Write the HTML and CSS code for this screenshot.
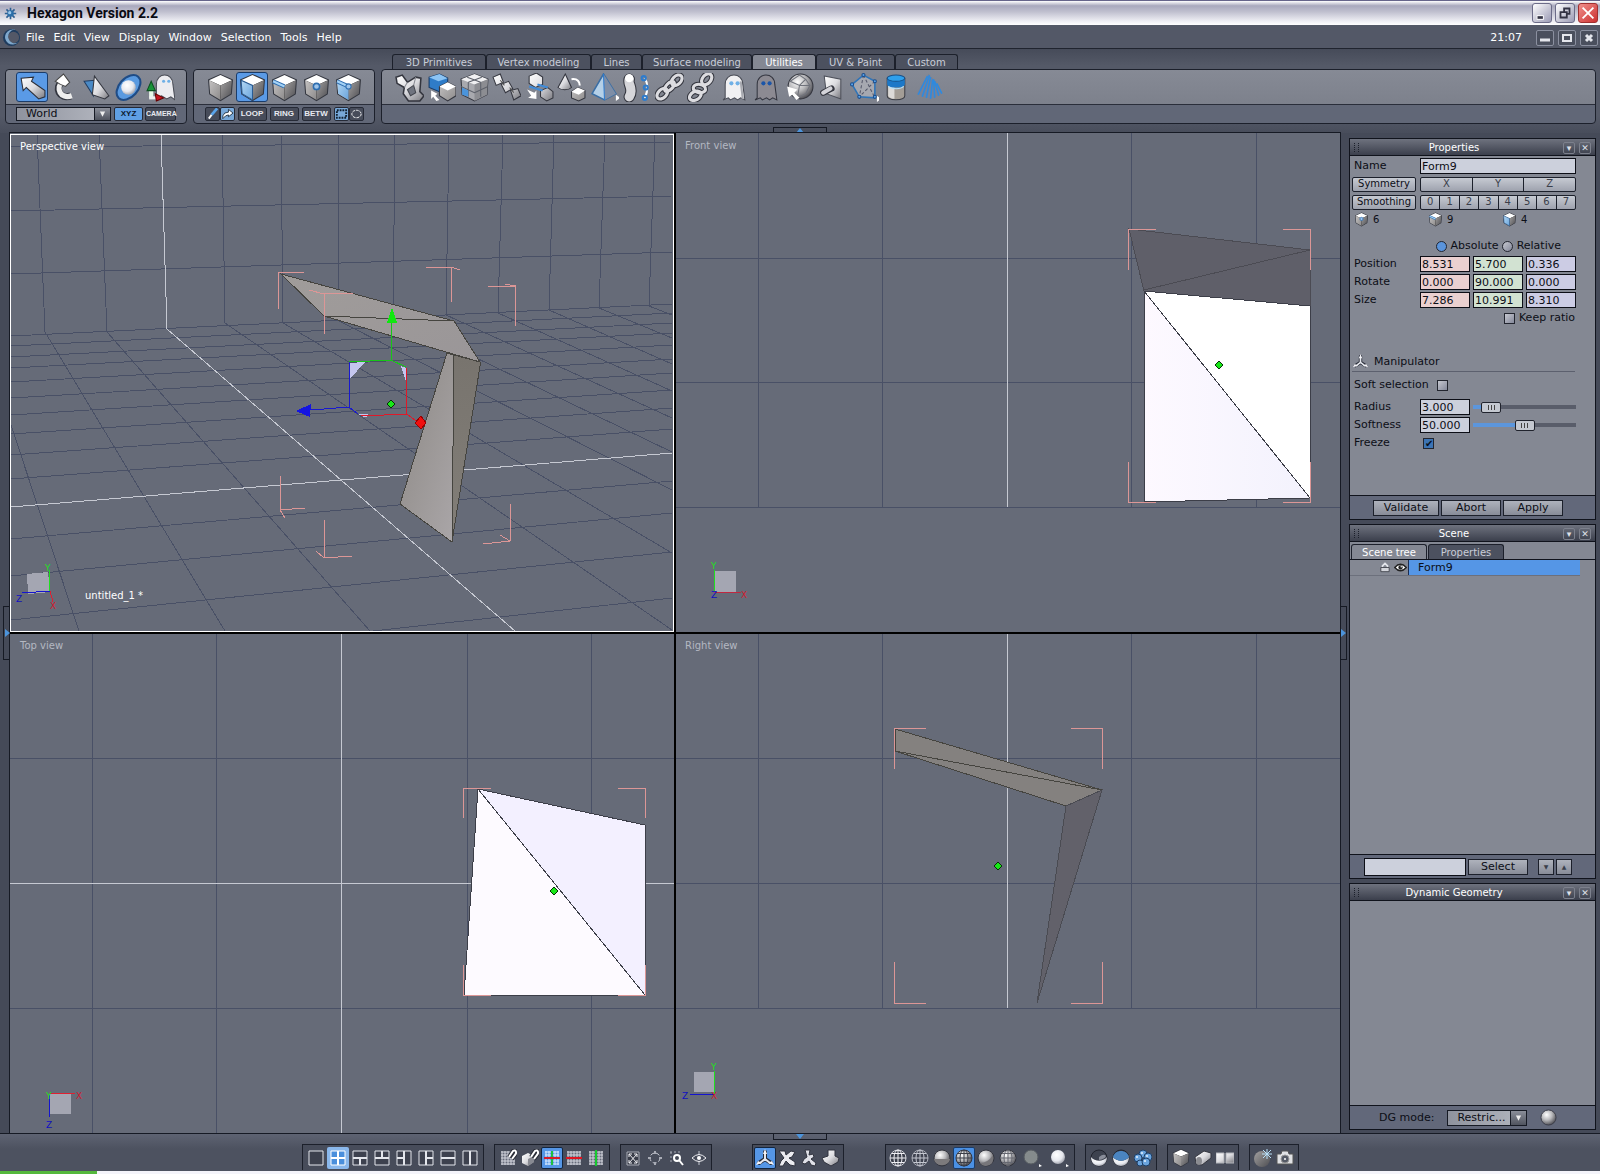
FILE: index.html
```html
<!DOCTYPE html>
<html lang="en">
<head>
<meta charset="utf-8">
<title>Hexagon Version 2.2</title>
<link rel="stylesheet" href="styles.css">
</head>
<body>

<svg class="defs" aria-hidden="true">
  <defs>
    <linearGradient id="gm" x1="0" y1="0" x2="1" y2="1"><stop offset="0" stop-color="#fff"/><stop offset=".5" stop-color="#dcdce0"/><stop offset="1" stop-color="#77777d"/></linearGradient>
    <linearGradient id="gl" x1="0" y1="0" x2="1" y2="1"><stop offset="0" stop-color="#c4c2c2"/><stop offset="1" stop-color="#8d8b8b"/></linearGradient>
    <linearGradient id="gd" x1="0" y1="0" x2="1" y2="1"><stop offset="0" stop-color="#a3a1a1"/><stop offset="1" stop-color="#4e4e52"/></linearGradient>
    <linearGradient id="gb" x1="0" y1="0" x2="1" y2="1"><stop offset="0" stop-color="#b4d8f4"/><stop offset="1" stop-color="#6aa4dc"/></linearGradient>
    <radialGradient id="rs" cx=".38" cy=".32" r=".7"><stop offset="0" stop-color="#fff"/><stop offset=".5" stop-color="#b9b9bc"/><stop offset="1" stop-color="#4f4f55"/></radialGradient>
    <radialGradient id="rw" cx=".4" cy=".35" r=".7"><stop offset="0" stop-color="#fff"/><stop offset=".6" stop-color="#e6e8ee"/><stop offset="1" stop-color="#9a9ca6"/></radialGradient>
    <linearGradient id="beam" x1="0" y1="0" x2="1" y2="1"><stop offset="0" stop-color="#a09c9a"/><stop offset="1" stop-color="#9a9698"/></linearGradient>
    <linearGradient id="legl" x1="0" y1="0" x2="1" y2="1"><stop offset="0" stop-color="#8c8884"/><stop offset="1" stop-color="#aaa6a8"/></linearGradient>
    <linearGradient id="legr" x1="0" y1="0" x2="0" y2="1"><stop offset="0" stop-color="#78746e"/><stop offset="1" stop-color="#827e78"/></linearGradient>
    <linearGradient id="lilac" x1="0" y1="0" x2="1" y2="0"><stop offset="0" stop-color="#fdf9ff"/><stop offset="1" stop-color="#f3f2fd"/></linearGradient>

    <symbol id="cube" viewBox="0 0 28 28"><path d="M14 2 25 7 24 20 14 26 4 20 3 7Z" stroke="#33363f" stroke-width="2"/><path d="M14 2 25 7 14 12 3 7Z" fill="#fff"/><path d="M3 7 14 12V26L4 20Z" fill="url(#gl)"/><path d="M25 7 14 12V26L24 20Z" fill="url(#gd)"/></symbol>
    <symbol id="cube-face" viewBox="0 0 28 28"><use href="#cube"/><path d="M3 7 14 12V26L4 20Z" fill="url(#gb)" stroke="#2a5c94"/></symbol>
    <symbol id="cube-edge" viewBox="0 0 28 28"><use href="#cube"/><path d="M3 8 14 13" stroke="#2f6eb0" stroke-width="4"/><path d="M3 8 14 13" stroke="#a4d2f6" stroke-width="2"/></symbol>
    <symbol id="cube-point" viewBox="0 0 28 28"><use href="#cube"/><circle cx="14" cy="13" r="3" fill="#9ec4ea" stroke="#2f6eb0" stroke-width="1.5"/></symbol>
    <symbol id="cube-auto" viewBox="0 0 28 28"><use href="#cube"/><path d="M3 7 14 12V26L4 20Z" fill="url(#gb)"/><path d="M3 8 14 13" stroke="#2f6eb0" stroke-width="4"/><path d="M3 8 14 13" stroke="#a4d2f6" stroke-width="2"/><circle cx="14" cy="13" r="2.500" fill="#9ec4ea" stroke="#2f6eb0"/></symbol>
    <symbol id="arrow" viewBox="0 0 28 28"><path d="M3 5 15 4 13 8 26 17V23L20 25 8 14 5 17Z" fill="url(#gm)" stroke="#2b2e38"/></symbol>
    <symbol id="rotate" viewBox="0 0 28 28"><path d="M20 22C9 26 4 14 12 8" fill="none" stroke="#32353f" stroke-width="7"/><path d="M21 22C10 26 5 14 12 8" fill="none" stroke="#eee" stroke-width="5"/><path d="M5 8 13 1 19 9 15 13 10 11Z" fill="#fff" stroke="#444"/></symbol>
    <symbol id="scale" viewBox="0 0 28 28"><path d="M2 8 12 7 11 22Z" fill="#4a8ac6" stroke="#223c60"/><path d="M12 3 26 22 22 25 10 21Z" fill="url(#gm)" stroke="#33363f"/></symbol>
    <symbol id="orbit" viewBox="0 0 28 28"><ellipse cx="14" cy="14" rx="14" ry="9" transform="rotate(-48 14 14)" fill="#5a9ae0" stroke="#1f4c86" stroke-width="2"/><circle cx="14" cy="14" r="7" fill="url(#rw)"/></symbol>
    <symbol id="ghost" viewBox="0 0 28 28"><path d="M5 24V11C5 -1 22 -1 22 11L24 26 20 24 17 26 14 24 10 26 8 24 3 26Z" fill="#f0f0f2" stroke="#494c56"/><path d="M20 8 22 25" stroke="#a7a9b0" stroke-width="2"/><circle cx="11" cy="10" r="2" fill="#6fb0e6"/><circle cx="17" cy="10" r="2" fill="#6fb0e6"/></symbol>
    <symbol id="ghost-dark" viewBox="0 0 28 28"><path d="M5 24V11C5 -1 22 -1 22 11L24 26 20 24 17 26 14 24 10 26 8 24 3 26Z" fill="#8c8a92" stroke="#33353f"/><circle cx="11" cy="10" r="2" fill="#1c56a8"/><circle cx="17" cy="10" r="2" fill="#1c56a8"/></symbol>
    <symbol id="ghost-axis" viewBox="0 0 28 28"><path d="M10 24V11C10 -1 26 -1 26 11L28 26 24 23 20 25 15 22Z" fill="#ececf0" stroke="#494c56"/><circle cx="17" cy="8" r="1.500" fill="#6fb0e6"/><circle cx="22" cy="8" r="1.500" fill="#6fb0e6"/><path d="M5 24V16" stroke="#e8f8e8" stroke-width="4"/><path d="M5 8 9 17H1Z" fill="#189438" stroke="#0c5020"/><path d="M3 24H10" stroke="#eee" stroke-width="3"/><path d="M9 20 17 24 10 27Z" fill="#c81420" stroke="#600"/></symbol>
    <symbol id="knot" viewBox="0 0 28 28"><path d="M1 4 7 2 12 9 20 4 25 5 24 18 28 22 24 27 13 27 8 20 9 14 2 10Z" fill="url(#gm)" stroke="#33353e" stroke-width="1.500"/><path d="M12 16 18 12 20 19 15 22Z" fill="#70747f" stroke="#44474f"/><path d="M12 9 9 14M20 4 18 12" stroke="#8a8c94"/></symbol>
    <symbol id="two-cubes" viewBox="0 0 28 28"><path d="M2 4 12 1 20 5V15L12 18 2 14Z" fill="#2f7cc8" stroke="#173a66"/><path d="M2 4 12 1 20 5 11 8Z" fill="#8cc4f4"/><path d="M12 13 20 9 28 13V22L20 27 12 22Z" fill="url(#gl)" stroke="#33353e"/><path d="M12 13 20 9 28 13 20 17Z" fill="#fff"/><path d="M4 17 10 20 8 22 12 26 9 27 6 23 4 25Z" fill="#fff"/></symbol>
    <symbol id="lattice" viewBox="0 0 28 28"><path d="M14 1 27 6 26 21 14 27 2 21 1 6Z" stroke="#33363f" fill="#a8a9ae"/><path d="M14 1 27 6 14 11 1 6Z" fill="#f0f0f2"/><path d="M27 6 14 11V27L26 21Z" fill="#8c8d92"/><path d="M1 13 14 19 27 13M8 9V23M20 9V23M7 4 20 9M21 4 8 9" fill="none" stroke="#5c606a"/><path d="M2 14 8 17V23L2 21Z" fill="#4a94dc"/></symbol>
    <symbol id="chain-cubes" viewBox="0 0 28 28"><path d="M1 4 8 1 11 9 4 12ZM9 11 16 8 20 15 13 19ZM18 17 25 15 28 22 21 26Z" fill="url(#gm)" stroke="#33353e"/><path d="M8 7 12 12M17 14 21 19" stroke="#555"/></symbol>
    <symbol id="stack" viewBox="0 0 28 28"><path d="M4 3 11 0 17 4V11L10 14 4 10ZM15 17 22 14 27 18V24L21 27 15 23Z" fill="url(#gm)" stroke="#33353e"/><path d="M4 13 17 17M12 11 22 14" stroke="#3f8ad8" stroke-width="2"/><path d="M2 16 9 19 11 17V25L3 24 6 22Z" fill="#fff"/></symbol>
    <symbol id="cone-cube" viewBox="0 0 28 28"><path d="M8 1 14 14C11 17 4 17 1 14Z" fill="url(#gm)" stroke="#33353e"/><path d="M14 18 20 14 27 17V24L21 27 14 24Z" fill="url(#gl)" stroke="#33353e"/><path d="M14 18 20 14 27 17 21 21Z" fill="#fff"/><path d="M14 6C20 5 22 9 22 12" fill="none" stroke="#fff" stroke-width="2"/></symbol>
    <symbol id="pyramid" viewBox="0 0 28 28"><path d="M13 1 25 20 14 26 2 20Z" fill="#b4d0e8" stroke="#3a6ea4" stroke-width="1.500"/><path d="M13 1 25 20 14 26Z" fill="#7f8ea6"/><path d="M13 1 14 26" stroke="#2f7cd0"/><path d="M25 21 29 24 25 27Z" fill="#fff"/></symbol>
    <symbol id="bend" viewBox="0 0 28 28"><path d="M7 6C5 11 12 15 7 23" fill="none" stroke="#33353e" stroke-width="11" stroke-linecap="round"/><path d="M7 6C5 11 12 15 7 23" fill="none" stroke="#d6d6da" stroke-width="9" stroke-linecap="round"/><circle cx="7" cy="5" r="4" fill="#fff"/><path d="M22 5Q27 13 22 24" fill="none" stroke="#fff" stroke-width="2"/><g fill="none" stroke="#2f7ccc" stroke-width="2"><circle cx="21" cy="5" r="2"/><circle cx="23" cy="14" r="2"/><circle cx="22" cy="24" r="2"/></g></symbol>
    <symbol id="link" viewBox="0 0 28 28"><g fill="none" stroke="#33353e" stroke-width="5"><ellipse cx="7" cy="20" rx="6" ry="4" transform="rotate(-45 7 20)"/><ellipse cx="14" cy="13" rx="6" ry="3" transform="rotate(-45 14 13)"/><ellipse cx="21" cy="7" rx="6" ry="4" transform="rotate(-45 21 7)"/></g><g fill="none" stroke="#dcdce0" stroke-width="3"><ellipse cx="7" cy="20" rx="6" ry="4" transform="rotate(-45 7 20)"/><ellipse cx="14" cy="13" rx="6" ry="3" transform="rotate(-45 14 13)"/><ellipse cx="21" cy="7" rx="6" ry="4" transform="rotate(-45 21 7)"/></g></symbol>
    <symbol id="unlink" viewBox="0 0 28 28"><g fill="none" stroke="#33353e" stroke-width="5"><ellipse cx="8" cy="22" rx="6" ry="4" transform="rotate(-30 8 22)"/><ellipse cx="12" cy="15" rx="6" ry="4" transform="rotate(10 12 15)"/><ellipse cx="19" cy="6" rx="6" ry="4" transform="rotate(-50 19 6)"/></g><g fill="none" stroke="#dcdce0" stroke-width="3"><ellipse cx="8" cy="22" rx="6" ry="4" transform="rotate(-30 8 22)"/><ellipse cx="12" cy="15" rx="6" ry="4" transform="rotate(10 12 15)"/><ellipse cx="19" cy="6" rx="6" ry="4" transform="rotate(-50 19 6)"/></g></symbol>
    <symbol id="mesh-ball" viewBox="0 0 28 28"><circle cx="15" cy="13" r="12" fill="url(#rs)" stroke="#33353e"/><path d="M5 8 14 2 20 6 14 12ZM14 12 24 12 20 6M14 12 12 24M24 12 20 20 12 24" fill="none" stroke="#70737c"/><path d="M2 13 12 16 9 19 14 24 11 26 7 21 4 23Z" fill="#fff"/></symbol>
    <symbol id="plane" viewBox="0 0 28 28"><path d="M7 3 23 6V25L9 20Z" fill="url(#gm)" stroke="#4d505a"/><path d="M6 19 14 15" stroke="#33353e" stroke-width="6" stroke-linecap="round"/><path d="M6 19 13 15" stroke="#d4d4da" stroke-width="4" stroke-linecap="round"/></symbol>
    <symbol id="poly" viewBox="0 0 28 28"><path d="M2 11 13 2 24 8V24L9 23Z" fill="#a6a8b0" stroke="#2f74b8" stroke-width="1.500"/><path d="M13 2 9 23M24 8 9 23M13 2 24 24" stroke="#55586a" stroke-dasharray="3 2"/><g fill="#5aa4ea" stroke="#1d4d8a"><circle cx="2" cy="11" r="1.500"/><circle cx="13" cy="2" r="1.500"/><circle cx="24" cy="8" r="1.500"/><circle cx="9" cy="23" r="1.500"/><circle cx="24" cy="23" r="1.500"/></g><path d="M26 22 30 25 26 28Z" fill="#fff"/></symbol>
    <symbol id="can" viewBox="0 0 28 28"><path d="M5 5V22C5 27 22 27 22 22V5Z" fill="#a39d96" stroke="#3c3e46"/><path d="M6 12V22C7 25 12 25 12 25V13Z" fill="#dcdad8"/><path d="M5 5V11C5 15 22 15 22 11V5Z" fill="#1c78c8"/><ellipse cx="13.500" cy="5" rx="8.500" ry="3" fill="#2fa0ec" stroke="#174f86"/><path d="M6 13C10 16 18 16 21 13" fill="none" stroke="#b4e0fa"/></symbol>
    <symbol id="hatch" viewBox="0 0 28 28"><path d="M13 1 20 8 26 20 14 25 2 20 6 12Z" fill="#76829a"/><path d="M3 21 12 3M7 23 14 2M11 24 15 4M15 25 17 6M19 24 18 6M23 22 19 8M26 20 21 10" stroke="#2d8ae0" stroke-width="1.500"/></symbol>

    <symbol id="frame" viewBox="0 0 18 18"><path d="M2 2H16V16H2Z" fill="#3d414e" stroke="#e4e6ec"/></symbol>
    <symbol id="grid" viewBox="0 0 18 18"><path d="M3 3H15V16H3Z" fill="#666b7a"/><path d="M3 2V16M6 2V16M9 2V16M12 2V16M15 2V16M2 3H16M2 6H16M2 9H16M2 12H16M2 15H16" stroke="#d4d6de"/></symbol>
    <symbol id="magnet" viewBox="0 0 18 18"><path d="M10 8 14 2C17 0 18 4 16 6L13 10" fill="none" stroke="#292c36" stroke-width="4"/><path d="M10 8 14 2C17 0 18 4 16 6L13 10" fill="none" stroke="#fff" stroke-width="2"/></symbol>
    <symbol id="tripod" viewBox="0 0 18 18"><path d="M9 3V10M9 10 3 14M9 10 15 14" stroke="#262a36" stroke-width="4" stroke-linecap="round"/><path d="M9 4V10M9 10 4 14M9 10 14 14" stroke="#e6e8ee" stroke-width="2" stroke-linecap="round"/><path d="M9 0 11 5H7ZM0 16 2 12 6 14ZM18 16 16 12 12 14Z" fill="#f4f4f8"/></symbol>
    <symbol id="cross" viewBox="0 0 18 18"><path d="M1 2H7L8 6 13 2 17 3 14 8 11 9 17 13V17L12 16 8 12 5 17H1L3 12 6 9Z" fill="#ececf0" stroke="#30333e"/></symbol>
    <symbol id="cross-b" viewBox="0 0 18 18"><path d="M5 1 10 1 9 6 13 5 14 8 11 10 16 14 15 17 11 16 9 12 5 15 2 14 4 10 7 8Z" fill="#e0e1e8" stroke="#30333e"/></symbol>
    <symbol id="press" viewBox="0 0 18 18"><path d="M6 1H13V7L17 9 16 13 9 17 2 13 0 9 6 7Z" fill="url(#gm)" stroke="#30333e"/></symbol>
    <symbol id="wires" viewBox="0 0 18 18"><path d="M9 1V17M1 9H17M3 4.500H15M3 13.500H15" fill="none" stroke="currentColor"/><ellipse cx="9" cy="9" rx="4" ry="8" fill="none" stroke="currentColor"/></symbol>
    <symbol id="bowl" viewBox="0 0 18 18"><circle cx="9" cy="9" r="8" fill="#3d424f" stroke="#20232d"/><path d="M1 8C1 20 17 20 17 8 13 13 5 13 1 8Z" fill="url(#rw)"/></symbol>
  </defs>
</svg>

<header>
  <div class="titlebar">
    <svg class="logo" viewBox="0 0 16 16"><path d="M8 1V15M1 8H15M3 3 13 13M13 3 3 13" stroke="#2d5f92" stroke-width="2"/><circle cx="8" cy="8" r="4" fill="#2b6ea8"/><circle cx="7" cy="7" r="2" fill="#9cc8ec"/></svg>
    <h1>Hexagon Version 2.2</h1>
    <div class="winbtns">
      <button aria-label="Minimize"><svg viewBox="0 0 20 20"><path d="M4 15H12" stroke="#fff" stroke-width="5"/><path d="M5 15H11" stroke="#334" stroke-width="3"/></svg></button>
      <button aria-label="Restore"><svg viewBox="0 0 20 20"><path d="M9 9V5H15V11H12M5 9H12V15H5Z" fill="none" stroke="#334" stroke-width="2"/></svg></button>
      <button class="close" aria-label="Close"><svg viewBox="0 0 20 20"><path d="M4 4 16 16M16 4 4 16" stroke="#fff" stroke-width="2"/></svg></button>
    </div>
  </div>
  <nav class="menubar">
    <svg class="moon" viewBox="0 0 20 20"><circle cx="10" cy="10" r="9" fill="#1f3c5e"/><circle cx="12" cy="10" r="6" fill="#535867"/><path d="M14 2A8 8 0 1 0 17 15 7 7 0 1 1 14 2Z" fill="#7fa8cc"/></svg>
    <a href="#">File</a><a href="#">Edit</a><a href="#">View</a><a href="#">Display</a><a href="#">Window</a><a href="#">Selection</a><a href="#">Tools</a><a href="#">Help</a>
    <time>21:07</time>
    <div class="docbtns">
      <button aria-label="Minimize document"><svg viewBox="0 0 16 14"><path d="M3 9H13" stroke="#e4e6ec" stroke-width="3"/></svg></button>
      <button aria-label="Maximize document"><svg viewBox="0 0 16 14"><path d="M4 4H12V10H4Z" fill="none" stroke="#e4e6ec" stroke-width="2"/></svg></button>
      <button aria-label="Close document"><svg viewBox="0 0 16 14"><path d="M5 4 11 10M11 4 5 10" stroke="#e4e6ec" stroke-width="3"/></svg></button>
    </div>
  </nav>
</header>

<section class="toolbar">
  <div class="toolbox small">
    <div class="tools">
      <button class="on" aria-label="Move"><svg><use href="#arrow"/></svg></button>
      <button aria-label="Rotate"><svg><use href="#rotate"/></svg></button>
      <button aria-label="Scale"><svg><use href="#scale"/></svg></button>
      <button aria-label="Universal"><svg><use href="#orbit"/></svg></button>
      <button aria-label="Ghost axis"><svg><use href="#ghost-axis"/></svg></button>
    </div>
    <div class="sub">
      <span class="drop world"><select aria-label="Space"><option>World</option></select><svg viewBox="0 0 8 8"><path d="M1 1H7L4 7Z" fill="#eee"/></svg></span>
      <button class="chip lit">XYZ</button><button class="chip cam">CAMERA</button>
    </div>
  </div>
  <div class="toolbox small">
    <div class="tools">
      <button aria-label="Object"><svg><use href="#cube"/></svg></button>
      <button class="on" aria-label="Faces"><svg><use href="#cube-face"/></svg></button>
      <button aria-label="Edges"><svg><use href="#cube-edge"/></svg></button>
      <button aria-label="Points"><svg><use href="#cube-point"/></svg></button>
      <button aria-label="Auto"><svg><use href="#cube-auto"/></svg></button>
    </div>
    <div class="sub chips">
      <span class="pair"><button class="chip" aria-label="Paint select"><svg viewBox="0 0 14 12"><path d="M12 0 6 7" stroke="#5aa4ea" stroke-width="3"/><path d="M6 7 3 11" stroke="#fff" stroke-width="2"/></svg></button><button class="chip lit" aria-label="Lasso"><svg viewBox="0 0 14 12"><path d="M2 11V8Q3 4 8 4V1L13 5 8 9V7Q5 7 2 11Z" fill="#fff" stroke="#234"/></svg></button></span>
      <button class="chip">LOOP</button><button class="chip">RING</button><button class="chip">BETW</button>
      <span class="pair"><button class="chip lit" aria-label="Rectangle"><svg viewBox="0 0 14 12"><path d="M2 2H12V10H2Z" fill="none" stroke="#123" stroke-width="2" stroke-dasharray="2 1"/></svg></button><button class="chip" aria-label="Ellipse"><svg viewBox="0 0 14 12"><ellipse cx="7" cy="6" rx="5" ry="4" fill="none" stroke="#fff" stroke-dasharray="3 1"/></svg></button></span>
    </div>
  </div>
  <div class="utility">
    <nav class="tabs">
      <button class="t1">3D Primitives</button><button class="t2">Vertex modeling</button><button class="t3">Lines</button><button class="t4">Surface modeling</button><button class="t5 active">Utilities</button><button class="t6">UV &amp; Paint</button><button class="t7">Custom</button>
    </nav>
    <div class="toolbox wide">
      <div class="tools many">
        <button aria-label="Knot"><svg><use href="#knot"/></svg></button>
        <button aria-label="Copy"><svg><use href="#two-cubes"/></svg></button>
        <button aria-label="Lattice"><svg><use href="#lattice"/></svg></button>
        <button aria-label="Array"><svg><use href="#chain-cubes"/></svg></button>
        <button aria-label="Align"><svg><use href="#stack"/></svg></button>
        <button aria-label="Replace"><svg><use href="#cone-cube"/></svg></button>
        <button aria-label="Symmetry"><svg><use href="#pyramid"/></svg></button>
        <button aria-label="Bend"><svg><use href="#bend"/></svg></button>
        <button aria-label="Link"><svg><use href="#link"/></svg></button>
        <button aria-label="Unlink"><svg><use href="#unlink"/></svg></button>
        <button aria-label="Ghost"><svg><use href="#ghost"/></svg></button>
        <button aria-label="Hide"><svg><use href="#ghost-dark"/></svg></button>
        <button aria-label="Smooth"><svg><use href="#mesh-ball"/></svg></button>
        <button aria-label="Plane"><svg><use href="#plane"/></svg></button>
        <button aria-label="Polygon"><svg><use href="#poly"/></svg></button>
        <button aria-label="Container"><svg><use href="#can"/></svg></button>
        <button aria-label="Hatch"><svg><use href="#hatch"/></svg></button>
      </div>
      <div class="sub"></div>
    </div>
  </div>
  <span class="grip top"><svg viewBox="0 0 8 5"><path d="M0 5 4 0 8 5Z" fill="#4c94dc"/></svg></span>
</section>

<main>
  <div class="views">
    <svg class="view" viewBox="10 133 664 499" preserveAspectRatio="xMidYMid slice">
      <g class="grid" fill="none">
        <path d="M37 134 45 332M99 134 107 332M222 134 225 323M281 134 283 323M338 134 339 321M395 134 393 318M449 134 446 315M503 134 498 313M554 134 549 310M605 134 599 308M655 134 649 306"/>
        <path d="M11 147 672 142M11 211 672 196M11 274 672 252M11 336 672 304M11 346 672 313M11 357 672 323M11 368 672 333M11 382 672 345M11 398 672 359M11 415 672 373M11 434 672 390M11 455 672 408M11 479 672 429M11 539 672 481M11 576 672 513M11 620 672 552M373 631 672 598"/>
        <path d="M11 425 79 631M45 332 225 631M107 332 370 631M225 323 672 630M283 323 672 553M339 321 672 490M393 318 672 452M446 315 672 418M498 313 672 391M549 310 672 364M599 308 672 338M649 306 672 315"/>
      </g>
      <path class="axis" d="M161 134 167 329 515 631M11 507 672 453"/>
      <g class="solid">
        <path d="M281 274 454 321 480 362 324 316Z" fill="url(#beam)"/>
        <path d="M447 353 454 355 452 542 400 504Z" fill="url(#legl)"/>
        <path d="M454 355 480 362V366L452 542Z" fill="url(#legr)"/>
        <path d="M324 316 454 321" fill="none"/>
      </g>
      <path class="bounds" d="M278 309V273L304 272M426 267H451V302M451 267 460 270M488 287 515 286V326M505 284 515 286M324 334V294L353 293M309 290 324 294M280 476V510L305 508M280 510 285 518M324 520V558L352 556M316 551 324 558M510 504V541L483 544M500 535 510 541"/>
      <path d="M349 363 365 362 349 380ZM401 366 406 368V381ZM358 414 377 415 364 417Z" fill="#c4c6ee"/>
      <g fill="none" stroke-width="1"><path d="M391 321V361M349 362 391 360 406 367" stroke="#17c617"/><path d="M349 362V407L311 410M349 407 358 414" stroke="#1818d0"/><path d="M406 367 407 414 361 416M407 414 416 421" stroke="#e01828"/></g>
      <path d="M392 307 397 323H387Z" fill="#10e810"/><path d="M296 411 311 404 310 417Z" fill="#1414e0"/><path d="M421 416 426 423 421 429 415 423Z" fill="#f01010" stroke="#900"/>
      <path class="pivot" d="M391 400 395 404 391 408 387 404Z"/>
      <path d="M27 574 48 572 50 592 28 594Z" fill="#a4a6b2"/><path d="M49 570 50 592" stroke="#1fe01f"/><path d="M22 593 50 591" stroke="#1414d0"/><path d="M50 591 53 602" stroke="#e02030"/>
      <g class="letters"><text class="y" x="45" y="571">Y</text><text class="z" x="16" y="602">Z</text><text class="x" x="50" y="609">X</text></g>
      <text class="vlabel hot" x="20" y="150">Perspective view</text>
      <text class="vlabel hot" x="85" y="599">untitled_1 *</text>
      <path d="M10.500 134.500H673.500V631.500H10.500Z" fill="none" stroke="#fff"/>
    </svg>

    <svg class="view" viewBox="676 133 664 499" preserveAspectRatio="xMidYMid slice">
      <path class="grid" d="M758.500 133V507M882.500 133V507M1131.500 133V507M1256.500 133V507M676 258.500H1340M676 382.500H1340M676 507.500H1340"/>
      <path class="axis" d="M1007.500 133V507"/>
      <g class="solid dark"><path d="M1129 229 1310 250V306L1144 291Z" fill="#5f5f69"/><path d="M1144 290 1310 250"/></g>
      <path d="M1144 291 1310 306V498Z" fill="#fff"/><path d="M1144 291 1310 498 1144 502Z" fill="url(#lilac)"/>
      <path d="M1144 291V502L1310 498M1144 291 1310 306V498M1144 291 1310 498" fill="none" stroke="#3c3e48"/>
      <path class="bounds" d="M1128.500 270V229.500H1156M1283 229.500H1310.500V270M1128.500 462V502.500H1156M1283 502.500H1310.500V462"/>
      <path class="pivot" d="M1219 361 1223 365 1219 369 1215 365Z"/>
      <path d="M715 571H736V592H715Z" fill="#a4a6b2"/><path d="M714.500 570V592" stroke="#1fe01f"/><path d="M714 592.500H741" stroke="#c02840"/>
      <g class="letters"><text class="y" x="711" y="569">Y</text><text class="z" x="711" y="598">Z</text><text class="x" x="741" y="598">X</text></g>
      <text class="vlabel" x="685" y="149">Front view</text>
    </svg>

    <svg class="view" viewBox="10 634 664 499" preserveAspectRatio="xMidYMid slice">
      <path class="grid" d="M92.500 634V1133M216.500 634V1133M467.500 634V1133M591.500 634V1133M10 758.500H674M10 1008.500H674"/>
      <path class="axis" d="M341.500 634V1133M10 883.500H674"/>
      <path d="M478 789 645 825V995Z" fill="#f3f0ff"/><path d="M478 789 645 995H464Z" fill="#fdfaff"/>
      <path d="M478 789 645 825V995H464ZL645 995" fill="none" stroke="#3c3e48"/>
      <path class="bounds" d="M463.500 818V788.500H491M618 788.500H645.500V818M463.500 965V995.500H491M618 995.500H645.500V965"/>
      <path class="pivot" d="M554 887 558 891 554 895 550 891Z"/>
      <path d="M50 1093H71V1114H50Z" fill="#a4a6b2"/><path d="M50 1093.500H75" stroke="#e02030"/><path d="M49.500 1095V1117" stroke="#1414d0"/>
      <g class="letters"><text class="y" x="46" y="1099">Y</text><text class="z" x="46" y="1128">Z</text><text class="x" x="76" y="1099">X</text></g>
      <text class="vlabel" x="20" y="649">Top view</text>
    </svg>

    <svg class="view" viewBox="676 634 664 499" preserveAspectRatio="xMidYMid slice">
      <path class="grid" d="M758.500 634V1008M882.500 634V1008M1131.500 634V1008M1256.500 634V1008M676 758.500H1340M676 883.500H1340M676 1008.500H1340"/>
      <path class="axis" d="M1007.500 634V1008"/>
      <g class="solid"><path d="M895 729 1102 790 1066 806 895 751Z" fill="#84817f"/><path d="M895 751 1102 790" fill="none"/></g>
      <path d="M1066 806 1102 790 1037 1003Z" fill="#62616a" stroke="#4a4b52"/>
      <path class="bounds" d="M894.500 769V728.500H926M1071 728.500H1102.500V769M894.500 962V1003.500H926M1071 1003.500H1102.500V962"/>
      <path class="pivot" d="M998 862 1002 866 998 870 994 866Z"/>
      <path d="M694 1072H715V1092H694Z" fill="#a4a6b2"/><path d="M714.500 1071V1094" stroke="#1fe01f"/><path d="M690 1094.500H715" stroke="#1414d0"/>
      <g class="letters"><text class="y" x="711" y="1070">Y</text><text class="z" x="682" y="1099">Z</text><text class="x" x="711" y="1099">X</text></g>
      <text class="vlabel" x="685" y="649">Right view</text>
    </svg>
    <span class="grip left"><svg viewBox="0 0 5 8"><path d="M0 0 5 4 0 8Z" fill="#4c94dc"/></svg></span>
    <span class="grip right"><svg viewBox="0 0 5 8"><path d="M0 0 5 4 0 8Z" fill="#4c94dc"/></svg></span>
  </div>

  <aside>
    <section class="panel props">
      <h2><i class="dots"></i><span>Properties</span><button aria-label="Collapse">▾</button><button aria-label="Close">✕</button></h2>
      <div class="body">
        <div class="row"><label for="nm">Name</label><input id="nm" class="name" value="Form9"></div>
        <div class="row"><button class="key">Symmetry</button><div class="seg"><button>X</button><button>Y</button><button>Z</button></div></div>
        <div class="row"><button class="key">Smoothing</button><div class="seg"><button>0</button><button>1</button><button>2</button><button>3</button><button>4</button><button>5</button><button>6</button><button>7</button></div></div>
        <div class="counts"><span><svg><use href="#cube-point"/></svg>6</span><span><svg><use href="#cube-edge"/></svg>9</span><span><svg><use href="#cube-face"/></svg>4</span></div>
        <div class="modes"><label><input type="radio" name="mode" checked>Absolute</label><label><input type="radio" name="mode">Relative</label></div>
        <div class="row"><label for="px">Position</label><div class="trio"><input id="px" class="r" value="8.531"><input class="g" value="5.700" aria-label="Position Y"><input class="b" value="0.336" aria-label="Position Z"></div></div>
        <div class="row"><label for="rx">Rotate</label><div class="trio"><input id="rx" class="r" value="0.000"><input class="g" value="90.000" aria-label="Rotate Y"><input class="b" value="0.000" aria-label="Rotate Z"></div></div>
        <div class="row"><label for="sx">Size</label><div class="trio"><input id="sx" class="r" value="7.286"><input class="g" value="10.991" aria-label="Size Y"><input class="b" value="8.310" aria-label="Size Z"></div></div>
        <div class="keep"><label><input type="checkbox">Keep ratio</label></div>
        <h3><svg viewBox="0 0 18 18"><use href="#tripod"/></svg>Manipulator</h3>
        <div class="soft"><label for="ss">Soft selection</label><input id="ss" type="checkbox"></div>
        <div class="row"><label for="ra">Radius</label><div class="slide"><input id="ra" value="3.000"><input type="range" value="10" style="--v:18%" aria-label="Radius slider"></div></div>
        <div class="row"><label for="so">Softness</label><div class="slide"><input id="so" value="50.000"><input type="range" value="50" style="--v:50%" aria-label="Softness slider"></div></div>
        <div class="row"><label for="fz">Freeze</label><input id="fz" class="fz" type="checkbox" checked></div>
      </div>
      <footer class="acts"><button class="w1">Validate</button><button>Abort</button><button>Apply</button></footer>
    </section>

    <section class="panel scene">
      <h2><i class="dots"></i><span>Scene</span><button aria-label="Collapse">▾</button><button aria-label="Close">✕</button></h2>
      <nav class="stabs"><button class="active">Scene tree</button><button>Properties</button></nav>
      <div class="body tree">
        <div class="node"><svg class="lock" viewBox="0 0 12 12"><path d="M3 6V4L6 1 9 4V6" fill="none" stroke="#e4e6ec" stroke-width="2"/><path d="M1 6H11V11H1Z" fill="#d4d6dc" stroke="#3a3c46"/></svg><svg class="eye" viewBox="0 0 18 18"><path d="M1 9Q9 0 17 9 9 18 1 9Z" fill="#fff" stroke="#222" stroke-width="2"/><circle cx="9" cy="9" r="3" fill="#222"/><circle cx="10" cy="8" r="1" fill="#fff"/></svg><span>Form9</span></div>
      </div>
      <footer class="find"><input aria-label="Search"><button>Select</button><div><button class="sq" aria-label="Next">▼</button><button class="sq" aria-label="Previous">▲</button></div></footer>
    </section>

    <section class="panel dyn">
      <h2><i class="dots"></i><span>Dynamic Geometry</span><button aria-label="Collapse">▾</button><button aria-label="Close">✕</button></h2>
      <div class="body"></div>
      <footer class="dgm"><label for="dg">DG mode:</label><span class="drop dg"><select id="dg"><option>Restric...</option></select><svg viewBox="0 0 8 8"><path d="M1 1H7L4 7Z" fill="#eee"/></svg></span><svg class="ball" viewBox="0 0 18 18"><circle cx="9" cy="9" r="8" fill="url(#rs)" stroke="#3a3d48"/></svg></footer>
    </section>
  </aside>
</main>

<footer class="dock">
  <span class="grip bottom"><svg viewBox="0 0 8 5"><path d="M0 0 4 5 8 0Z" fill="#4c94dc"/></svg></span>
  <div class="group g1">
    <button aria-label="Single view"><svg viewBox="0 0 18 18"><use href="#frame"/></svg></button>
    <button class="lit" aria-label="Four views"><svg viewBox="0 0 18 18"><path d="M2 2H16V16H2Z" fill="#4a8fdc" stroke="#fff"/><path d="M9 2V16M2 9H16" stroke="#fff" stroke-width="2"/></svg></button>
    <button aria-label="Layout 3"><svg viewBox="0 0 18 18"><use href="#frame"/><path d="M2 9H16M9 9V16" stroke="#e4e6ec" stroke-width="2"/></svg></button>
    <button aria-label="Layout 4"><svg viewBox="0 0 18 18"><use href="#frame"/><path d="M2 9H16M9 2V9" stroke="#e4e6ec" stroke-width="2"/></svg></button>
    <button aria-label="Layout 5"><svg viewBox="0 0 18 18"><use href="#frame"/><path d="M9 2V16M2 9H9" stroke="#e4e6ec" stroke-width="2"/></svg></button>
    <button aria-label="Layout 6"><svg viewBox="0 0 18 18"><use href="#frame"/><path d="M9 2V16M9 9H16" stroke="#e4e6ec" stroke-width="2"/></svg></button>
    <button aria-label="Layout 7"><svg viewBox="0 0 18 18"><use href="#frame"/><path d="M2 9H16" stroke="#e4e6ec" stroke-width="2"/></svg></button>
    <button aria-label="Layout 8"><svg viewBox="0 0 18 18"><use href="#frame"/><path d="M9 2V16" stroke="#e4e6ec" stroke-width="2"/></svg></button>
  </div>
  <div class="group g2">
    <button aria-label="Snap to grid"><svg viewBox="0 0 18 18"><use href="#grid"/><use href="#magnet"/></svg></button>
    <button aria-label="Snap to object"><svg viewBox="0 0 18 18"><path d="M1 7 7 4 13 7V13L7 17 1 14Z" fill="url(#gm)"/><path d="M7 10 13 7V13L7 17Z" fill="#888a92"/><use href="#magnet"/></svg></button>
    <button class="on" aria-label="Grid XZ"><svg viewBox="0 0 18 18"><path d="M3 2V16M6 2V16M12 2V16M15 2V16M2 3H16M2 6H16M2 12H16M2 15H16" stroke="#dcecff"/><path d="M9 2V16" stroke="#1fc040" stroke-width="2"/><path d="M1 9H17" stroke="#d81c28" stroke-width="2"/></svg></button>
    <button aria-label="Grid X"><svg viewBox="0 0 18 18"><use href="#grid"/><path d="M1 9H17" stroke="#e01420" stroke-width="2"/></svg></button>
    <button aria-label="Grid Y"><svg viewBox="0 0 18 18"><use href="#grid"/><path d="M9 1V17" stroke="#18c830" stroke-width="2"/></svg></button>
  </div>
  <div class="group g3">
    <button aria-label="Fit all"><svg viewBox="0 0 18 18"><path d="M3 3H15V16H3Z" fill="#393d49" stroke="#a9acb6"/><path d="M5 5 13 14M13 5 5 14M5 8V5H8M10 5H13V8M5 11V14H8M13 11V14H10" fill="none" stroke="#f0f0f4"/></svg></button>
    <button aria-label="Centre"><svg viewBox="0 0 18 18"><circle cx="9" cy="9" r="5" fill="none" stroke="#c4c7d0" stroke-dasharray="4 2"/><path d="M9 2V5M9 13V16M2 9H5M13 9H16" stroke="#a9acb6" stroke-width="2"/></svg></button>
    <button aria-label="Zoom area"><svg viewBox="0 0 18 18"><path d="M2 3H13M3 3V14" stroke="#a9acb6" stroke-dasharray="2 2"/><circle cx="9" cy="9" r="3" fill="#444956" stroke="#fff" stroke-width="2"/><path d="M11 11 15 16" stroke="#fff" stroke-width="2"/></svg></button>
    <button aria-label="Look at"><svg viewBox="0 0 18 18"><path d="M9 2V6M9 12V16" stroke="#c4c7d0"/><path d="M2 9Q9 2 16 9 9 16 2 9Z" fill="none" stroke="#f0f0f4"/><circle cx="9" cy="9" r="2" fill="#fff"/></svg></button>
  </div>
  <div class="group g4">
    <button class="on" aria-label="Manipulator"><svg viewBox="0 0 18 18"><use href="#tripod"/></svg></button>
    <button aria-label="Cut axis"><svg viewBox="0 0 18 18"><use href="#cross"/></svg></button>
    <button aria-label="Free axis"><svg viewBox="0 0 18 18"><use href="#cross-b"/></svg></button>
    <button aria-label="Drop"><svg viewBox="0 0 18 18"><use href="#press"/></svg></button>
  </div>
  <div class="group g5">
    <button aria-label="Wireframe"><svg viewBox="0 0 18 18" color="#f0f0f4"><circle cx="9" cy="9" r="8" fill="#3a3e4a" stroke="#d4d6dc"/><use href="#wires"/></svg></button>
    <button aria-label="Hidden lines"><svg viewBox="0 0 18 18" color="#c4c7d0"><circle cx="9" cy="9" r="8" fill="#3f4350" stroke="#a9acb6"/><use href="#wires"/></svg></button>
    <button aria-label="Flat"><svg viewBox="0 0 18 18"><circle cx="9" cy="9" r="8" fill="url(#rs)" stroke="#33353e"/><path d="M1 10H17C16 18 2 18 1 10Z" fill="#7c7a7c"/></svg></button>
    <button class="blue" aria-label="Flat with wires"><svg viewBox="0 0 18 18" color="#3b3e48"><circle cx="9" cy="9" r="8" fill="url(#rs)" stroke="#33353e"/><use href="#wires"/></svg></button>
    <button aria-label="Smooth"><svg viewBox="0 0 18 18"><circle cx="9" cy="9" r="8" fill="url(#rs)" stroke="#33353e"/><path d="M3 14Q11 14 16 6 18 16 9 17 5 17 3 14Z" fill="#77767a"/></svg></button>
    <button aria-label="Smooth wires"><svg viewBox="0 0 18 18" color="#666871"><circle cx="9" cy="9" r="8" fill="url(#rs)" stroke="#33353e"/><use href="#wires"/></svg></button>
    <button class="more" aria-label="Transparency"><svg viewBox="0 0 20 18"><circle cx="9" cy="8" r="7" fill="#858b8c" stroke="#555a60"/><path d="M17 15 20 17 17 18Z" fill="#fff"/></svg></button>
    <button class="more" aria-label="Light"><svg viewBox="0 0 20 18"><circle cx="9" cy="8" r="7" fill="url(#rw)"/><path d="M17 15 20 17 17 18Z" fill="#fff"/></svg></button>
  </div>
  <div class="group g6">
    <button aria-label="Back faces"><svg viewBox="0 0 18 18"><use href="#bowl"/><path d="M9 11Q15 10 16 7 14 4 9 8Z" fill="#8a8e9a"/></svg></button>
    <button aria-label="Blue back faces"><svg viewBox="0 0 18 18"><use href="#bowl"/><path d="M1 8C3 0 15 0 17 8 13 13 5 13 1 8Z" fill="#4a84c0"/></svg></button>
    <button aria-label="Clusters"><svg viewBox="0 0 18 18"><g fill="#6aa4de" stroke="#1d3e66"><circle cx="9" cy="5" r="4"/><circle cx="4" cy="9" r="4"/><circle cx="14" cy="8" r="4"/><circle cx="6" cy="14" r="3"/><circle cx="12" cy="13" r="4"/></g><g fill="#e4f0fc"><circle cx="8" cy="4" r="1"/><circle cx="3" cy="8" r="1"/><circle cx="13" cy="7" r="1"/><circle cx="11" cy="12" r="1"/></g></svg></button>
  </div>
  <div class="group g7">
    <button aria-label="Solid"><svg viewBox="2 1 24 26"><use href="#cube" width="28" height="28"/></svg></button>
    <button aria-label="Tube"><svg viewBox="0 0 18 18"><path d="M1 8 10 2 17 4V9L8 16 2 15Z" fill="url(#gm)" stroke="#33353e"/><ellipse cx="5" cy="12" rx="3" ry="4" fill="#8a8b90"/></svg></button>
    <button aria-label="Compare"><svg viewBox="0 0 18 18"><path d="M0 4H8V14H0ZM10 4H18V14H10Z" fill="url(#gm)" stroke="#b4b6bc"/></svg></button>
  </div>
  <div class="group g8">
    <button aria-label="Render"><svg viewBox="0 0 18 18"><circle cx="8" cy="10" r="8" fill="url(#gd)"/><path d="M13 0V10M8 5H18M9 1 17 9M17 1 9 9" stroke="#b8e0f8"/></svg></button>
    <button aria-label="Snapshot"><svg viewBox="0 0 18 18"><path d="M1 5H5L6 2H12L13 5H17V15H1Z" fill="#e0e1e4" stroke="#555"/><circle cx="9" cy="10" r="4" fill="#555a66" stroke="#999"/><circle cx="9" cy="10" r="1" fill="#fff"/></svg></button>
  </div>
</footer>
<div class="edge"></div>
</body>
</html>
```
FILE: styles.css
```css
* { box-sizing: border-box; }

body {
  margin: 0;
  min-height: 100vh;
  display: flex;
  flex-direction: column;
  background: #4f5462;
  color: #0c0e16;
  font: 11px/14px "DejaVu Sans", Verdana, sans-serif;
}

button, input, select { font: inherit; color: inherit; margin: 0; padding: 0; }
button { border: 0; background: none; }
svg { display: block; }
h1, h2, h3 { margin: 0; font: inherit; }
.defs { position: absolute; width: 0; height: 0; }

/* window chrome */
.titlebar {
  height: 25px;
  display: flex;
  align-items: center;
  padding: 0 2px 0 4px;
  border-top: 1px solid #66658a;
  background: linear-gradient(#fff, #a9a9bd 20%, #c0c0cf 45%, #f0f0f5 85%, #fff);
}
.logo { width: 13px; height: 13px; }
.titlebar h1 {
  flex: 1;
  padding-left: 10px;
  color: #0a0a12;
  font: bold 14px/20px Roboto, "Open Sans", sans-serif;
}
.winbtns { display: flex; gap: 3px; }
.winbtns button {
  width: 20px;
  height: 20px;
  border: 1px solid #6c6c88;
  border-radius: 3px;
  background: linear-gradient(135deg, #fff, #9a9ab4);
}
.winbtns .close { border-color: #a03030; background: linear-gradient(135deg, #f0908c, #cc3030); }
.winbtns svg { width: 18px; height: 18px; }

.menubar {
  height: 24px;
  display: flex;
  align-items: center;
  gap: 9px;
  padding: 2px 2px 0;
  border-bottom: 1px solid #20242f;
  background: #535867;
}
.menubar a, .menubar time { color: #fff; text-decoration: none; }
.menubar .moon { width: 19px; height: 19px; margin: 0 -4px 0 0; }
.menubar time { margin-left: auto; }
.docbtns { display: flex; gap: 4px; padding-left: 5px; }
.docbtns button {
  width: 18px;
  height: 16px;
  border: 1px solid #8b90a0;
  border-radius: 2px;
  background: #4a4f5d;
}
.docbtns svg { width: 16px; height: 14px; }

/* top tool area */
.toolbar {
  position: relative;
  height: 84px;
  display: flex;
  align-items: flex-end;
  gap: 6px;
  padding: 0 4px 9px 5px;
  background: linear-gradient(#464b59, #545967 20%, #545967 80%, #484d5b);
}
.toolbox {
  border: 1px solid #1c202b;
  border-radius: 4px;
  background: #616777;
}
.small { width: 182px; }
.utility { flex: 1; }
.tools {
  height: 35px;
  display: flex;
  padding: 2px 10px;
  border-bottom: 1px solid #2a2e3a;
  border-radius: 4px 4px 0 0;
  background: linear-gradient(#868a95, #7d818c);
}
.tools button {
  width: 32px;
  height: 30px;
  display: grid;
  place-content: center;
  border: 1px solid transparent;
  border-radius: 3px;
}
.tools button svg { width: 29px; height: 29px; overflow: visible; }
.tools .on { border-color: #1c3c68; background: #5a9ae6; }
.tools.many { padding: 2px calc(100% - 562px) 2px 12px; justify-content: space-between; }
.tools.many button { width: 30px; }
.sub { height: 18px; display: flex; align-items: center; gap: 2px; padding: 0 10px; }
.chips { gap: 3px; padding: 0; justify-content: center; }
.pair { display: flex; }
.pair .chip { width: 15px; }
.chip {
  width: 29px;
  height: 14px;
  border: 1px solid #262a36;
  border-radius: 2px;
  background: #474c5a;
  color: #e8eaf0;
  font: bold 8px/12px "Liberation Sans", Arial, sans-serif;
}
.chip svg { width: 13px; height: 12px; }
.chip.cam { width: 31px; font-size: 7px; }
.chip.lit { background: #5f9fe4; color: #0c1a30; }
.pair .lit { background: #78a8d8; }

.drop {
  display: grid;
  grid-template-columns: 1fr 16px;
  align-items: center;
  border: 1px solid #161a24;
  background: linear-gradient(90deg, #8f939e, #b4b7c0);
}
.drop select {
  min-width: 0;
  border: 0;
  appearance: none;
  background: none;
  padding-left: 9px;
  line-height: 12px;
}
.drop svg { width: 16px; height: 12px; padding: 2px 4px; background: linear-gradient(#8a8e99, #50545f); border-left: 1px solid #161a24; }
.world { width: 95px; height: 14px; margin-right: 1px; }

.tabs { display: flex; padding-left: 11px; }
.tabs button {
  height: 15px;
  border: 1px solid #1c202b;
  border-bottom: 0;
  border-radius: 3px 3px 0 0;
  background: #4c515f;
  color: #c9cdd8;
  font-size: 10px;
  line-height: 13px;
}
.tabs .active { background: #848893; color: #fff; }
.t1 { width: 94px; } .t2 { width: 105px; } .t3 { width: 51px; } .t4 { width: 110px; }
.t5 { width: 64px; } .t6 { width: 79px; } .t7 { width: 63px; }

/* small handles that fold the docks away; they lie over the borders */
.grip { position: absolute; border: 1px solid #161a24; display: flex; justify-content: center; align-items: center; }
.grip.top, .grip.bottom { width: 54px; height: 6px; left: 50%; margin-left: -27px; }
.grip.top { bottom: 0; border-bottom: 0; }
.grip.bottom { top: 0; border-top: 0; }
.grip.top svg, .grip.bottom svg { width: 8px; height: 5px; }
.grip.left, .grip.right { width: 7px; height: 54px; top: 50%; margin-top: -27px; }
.grip.left { left: -7px; border-right: 0; }
.grip.right { right: -7px; border-left: 0; }
.grip.left svg, .grip.right svg { width: 5px; height: 8px; }

/* viewports */
main {
  flex: 1;
  min-height: 0;
  display: flex;
  padding-left: 10px;
  background: #454a58;
}
.views {
  position: relative;
  flex: 1;
  min-width: 0;
  display: grid;
  grid-template: minmax(0, 1fr) minmax(0, 1fr) / minmax(0, 1fr) minmax(0, 1fr);
  gap: 2px;
  background: #000;
  outline: 1px solid #161a24;
}
.view { width: 100%; height: 100%; background: #666b78; }
.view path { shape-rendering: crispEdges; }
.grid { stroke: #495066; fill: none; }
.axis { stroke: #c6c9d2; fill: none; }
.bounds { stroke: #dc9696; fill: none; }
.solid { stroke: #45443f; }
.solid.dark { stroke: #4b4b53; }
.pivot { fill: #18e818; stroke: #053005; }
.vlabel { fill: #b4b8c2; font-size: 10px; }
.vlabel.hot { fill: #fff; }
.letters { font-size: 9px; }
.x { fill: #d01c30; } .y { fill: #20e020; } .z { fill: #1010c0; }

/* right dock */
aside {
  width: 260px;
  display: flex;
  flex-direction: column;
  gap: 4px;
  padding: 5px 4px 3px 9px;
}
.panel { display: flex; flex-direction: column; border: 1px solid #10131c; background: #848893; }
.scene { flex: 357 1 0; }
.dyn { flex: 247 1 0; }
.panel h2 {
  height: 17px;
  display: flex;
  align-items: center;
  gap: 4px;
  padding: 1px 4px 0;
  border-bottom: 1px solid #10131c;
  background: linear-gradient(#6e727e, #3b3f4c);
  color: #fff;
  font-size: 10px;
}
.panel h2 span { flex: 1; padding-right: 14px; text-align: center; }
.panel h2 button {
  width: 12px;
  height: 12px;
  border: 1px solid #7c808c;
  border-radius: 2px;
  color: #dfe1e8;
  font-size: 9px;
  line-height: 10px;
}
.dots {
  width: 5px;
  height: 9px;
  border: dotted #1c202b;
  border-width: 0 1px;
}
.body { flex: 1; min-height: 0; }

.panel input {
  border: 1px solid #0c0e16;
  background: #ccd0dc;
  height: 16px;
  padding: 0 1px;
  min-width: 0;
}
.props .body { padding: 1px 20px 43px 2px; display: flex; flex-direction: column; }
.row { height: 18px; display: grid; grid-template-columns: 64px 156px; align-items: center; gap: 4px; }
.row > label { padding-left: 2px; }
.key, .seg {
  height: 15px;
  border: 1px solid #1c202b;
  border-radius: 2px;
  background: linear-gradient(#c6cad2, #9ea2ae);
}
.key { font-size: 10px; line-height: 12px; }
.seg { display: flex; color: #3a3e4a; }
.seg button { flex: 1; font-size: 10px; line-height: 12px; }
.seg button + button { border-left: 1px solid #1c202b; }
.counts { height: 17px; display: grid; grid-template-columns: 74px 74px 74px; padding-left: 2px; font-size: 10px; }
.counts span { display: flex; align-items: center; gap: 4px; }
.counts svg { width: 15px; height: 15px; }
.modes { height: 27px; display: flex; align-items: flex-end; justify-content: flex-end; gap: 3px; padding: 0 14px 2px 0; }
.modes label, .keep label { display: flex; align-items: center; gap: 4px; }
.panel input[type=radio], .panel input[type=checkbox] {
  appearance: none;
  width: 11px;
  height: 11px;
  border: 1px solid #22252f;
  background: linear-gradient(135deg, #c6c8d0, #84889a);
}
.panel input[type=radio] { border-radius: 50%; }
.panel input[type=radio]:checked { background: #5a94dc; }
.panel input[type=checkbox]:checked { background: #3c74b4; display: grid; place-items: center; }
.panel input[type=checkbox]:checked::after { content: "✔"; color: #06101e; font-size: 10px; line-height: 9px; }
.trio { display: grid; grid-template-columns: 1fr 1fr 1fr; gap: 3px; }
.panel .r { background: #ead0d0; }
.panel .g { background: #d2e2d2; }
.panel .b { background: #cccce4; }
.keep { height: 18px; display: flex; justify-content: flex-end; align-items: center; }
.props h3 { height: 45px; display: flex; align-items: flex-end; gap: 6px; padding: 0 0 2px 1px; border-bottom: 1px solid #5c606e; }
.props h3 svg { width: 15px; height: 15px; }
.soft { height: 26px; display: flex; align-items: center; gap: 8px; padding-left: 2px; }
.slide { display: grid; grid-template-columns: 50px 103px; gap: 3px; align-items: center; }
.panel input[type=range] {
  appearance: none;
  border: 0;
  height: 12px;
  padding: 0;
  background: linear-gradient(90deg, #5c96dc var(--v), #595d6a var(--v)) 0 50% / 100% 4px no-repeat;
}
.panel input[type=range]::-webkit-slider-thumb {
  appearance: none;
  width: 20px;
  height: 11px;
  border: 1px solid #20232d;
  border-radius: 2px;
  background: repeating-linear-gradient(90deg, #444 0 1px, #c8ccd4 1px 3px) 50% 50% / 7px 5px no-repeat, #c4c8d0;
}
.fz { margin-left: 3px; }

.panel footer { height: 24px; display: flex; align-items: center; border-top: 1px solid #10131c; background: #62687a; }
.panel footer button {
  width: 60px;
  height: 16px;
  border: 1px solid #1c202b;
  background: linear-gradient(#aeb2bc, #888c98);
  line-height: 14px;
}
.acts { gap: 2px; padding-left: 23px; }
.panel .acts .w1 { width: 66px; }
.stabs { display: flex; padding: 2px 1px 0; gap: 1px; border-bottom: 1px solid #10131c; }
.stabs button {
  width: 76px;
  height: 15px;
  border: 1px solid #1c202b;
  border-bottom: 0;
  border-radius: 3px 3px 0 0;
  background: #4c515f;
  color: #c9cdd8;
  font-size: 10px;
  line-height: 13px;
}
.stabs .active { background: #848893; color: #fff; }
.node { height: 16px; display: flex; align-items: center; gap: 4px; padding-left: 30px; border-bottom: 1px solid #6c707c; margin-right: 15px; }
.node span { flex: 1; height: 15px; margin-left: -3px; padding-left: 9px; border-left: 1px solid #1c2c50; background: #5596e6; line-height: 16px; }
.lock { width: 10px; height: 11px; }
.eye { width: 13px; height: 13px; }
.find { padding-left: 14px; gap: 2px; }
.find input { width: 102px; height: 18px; }
.find div { display: flex; gap: 2px; padding-left: 8px; }
.panel footer .sq { width: 16px; color: #3a3e4a; font-size: 6px; }
.dgm { padding-left: 29px; }
.dg { width: 80px; height: 16px; margin: 0 13px; }
.dg svg { height: 14px; }
.ball { width: 17px; height: 17px; }

/* bottom dock */
.dock {
  position: relative;
  height: 38px;
  display: flex;
  align-items: flex-end;
  justify-content: center;
  gap: 10px;
  padding: 0 0 1px;
  border-top: 1px solid #161a24;
  background: linear-gradient(#5e6372, #4d5260 40%);
}
.group { height: 26px; display: flex; align-items: center; padding: 0 2px; border: 1px solid #1c202b; border-bottom: 0; background: #474c5a; }
.group button { width: 22px; height: 22px; display: grid; place-items: center; border: 1px solid transparent; border-radius: 2px; }
.group svg { width: 18px; height: 18px; }
.group .lit { background: #8ab8ec; }
.group .on { background: #5596e6; border-color: #14263f; }
.group .blue { background: #4a90e4; border-color: #1c3c68; }
.group .more { width: 27px; }
.group .more svg { width: 20px; }
.g3, .g4, .g5 { padding: 0 1px; }
.g3 { margin-right: 30px; }
.g4 { margin-right: 31px; }
.edge { height: 3px; background: linear-gradient(90deg, #54b83c 97px, #f4f4fa 97px); }
```
